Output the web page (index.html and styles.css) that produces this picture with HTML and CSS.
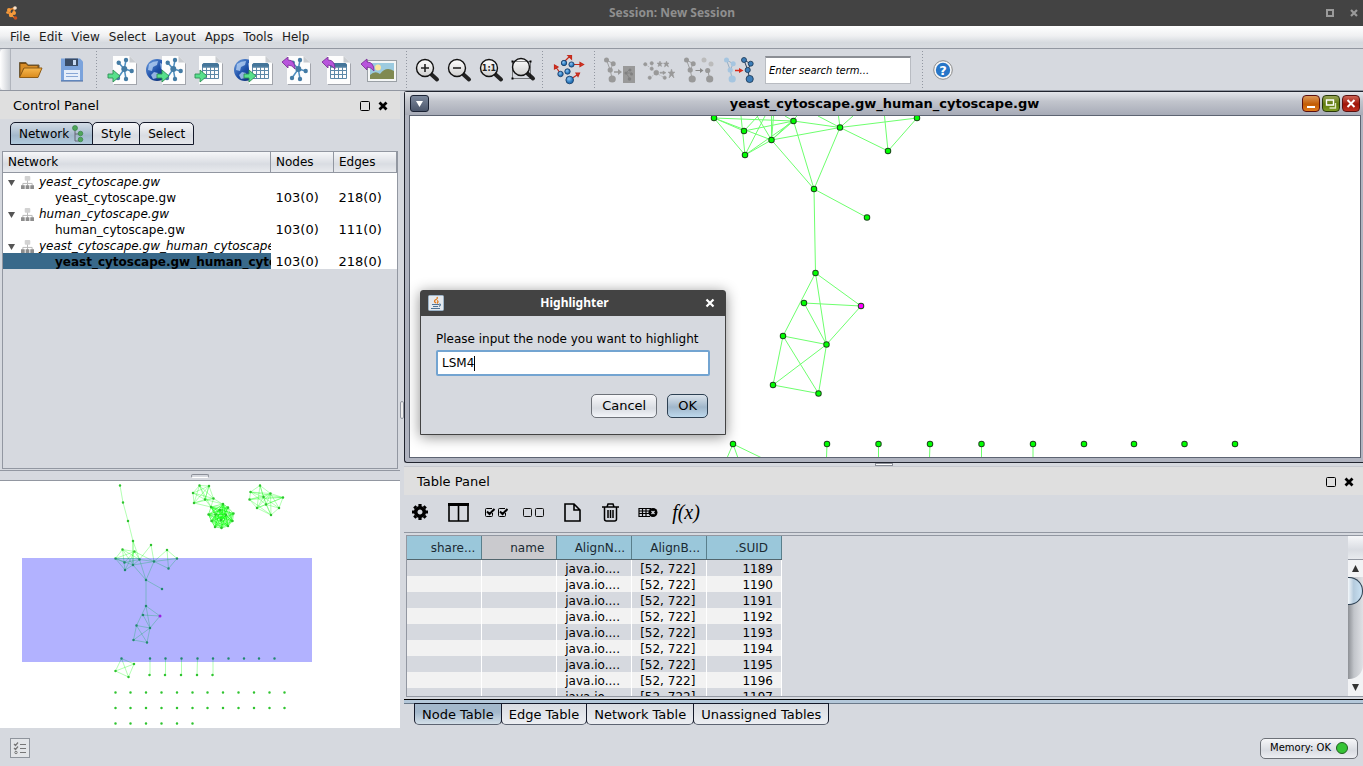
FILE: index.html
```html
<!DOCTYPE html>
<html lang="en">
<head>
<meta charset="utf-8">
<title>Session: New Session</title>
<link rel="stylesheet" href="styles.css">
</head>
<body>
<svg class="defs" aria-hidden="true">
  <defs>
    <linearGradient id="gGlobe" x1="0" x2="1" y1="0" y2="1"><stop offset="0" stop-color="#6fa0e0"/><stop offset=".5" stop-color="#1d4fa8"/><stop offset="1" stop-color="#0a2560"/></linearGradient>
    <linearGradient id="gLens" x1="0" x2="0" y1="0" y2="1"><stop offset="0" stop-color="#fff"/><stop offset="1" stop-color="#cfcfcf"/></linearGradient>
    <radialGradient id="gBlue" cx=".4" cy=".35"><stop offset="0" stop-color="#8cc6f5"/><stop offset="1" stop-color="#2573b8"/></radialGradient>
    <linearGradient id="gFolder" x1="0" x2="0" y1="0" y2="1"><stop offset="0" stop-color="#f8b84e"/><stop offset="1" stop-color="#d98a1d"/></linearGradient>
    <g id="page">
      <path d="M1 1H17L24 8V29H1Z" fill="#8b8f96" opacity=".7"/>
      <path d="M0 0H16.500L23 6.500V28H0Z" fill="#fdfdfd"/>
      <path d="M16.500 0V6.500H23Z" fill="#c9ccd0"/>
    </g>
    <g id="netpage">
      <use href="#page"/>
      <path d="M5.700 6.700L11.300 13L13 4M11.300 13L18.700 15M5 22L11.300 13L13 23" stroke="#4f8fc0" stroke-width="1.500" fill="none"/>
      <g fill="#447ba4"><circle cx="5.700" cy="6.700" r="2.200"/><circle cx="13" cy="4" r="2.200"/><circle cx="11.300" cy="13" r="3"/><circle cx="18.700" cy="15" r="2.200"/><circle cx="5" cy="22" r="2.200"/><circle cx="13" cy="23" r="2.200"/></g>
    </g>
    <g id="tablepage">
      <use href="#page"/>
      <path d="M3.500 11V9Q3.500 7.500 5 7.500H18Q19.500 7.500 19.500 9V11Z" fill="#44759a" stroke="#44759a"/>
      <path d="M3.500 11H19.500V22.500H3.500ZM3.500 14.500H19.500M3.500 18.500H19.500M7.500 11V22.500M11.500 11V22.500M15.500 11V22.500" fill="none" stroke="#5c88a8"/>
    </g>
    <path id="arrowin" d="M0 4H5V0L12 6L5 12V8H0Z" fill="#57e08c" stroke="#2f8f55" stroke-width=".9"/>
    <path id="arrowout" d="M0 5L6 0V3Q13 3 13 12Q10 8 6 8V11Z" fill="#b854dc" stroke="#7d3399" stroke-width=".9"/>
    <g id="globe">
      <circle r="11" fill="url(#gGlobe)"/>
      <path d="M-8 -6Q-4 -9 1 -9L0 -5L-4 -3L-5 1L-9 0ZM-3 2L1 3L0 8L-4 9L-6 5ZM3 -7L8 -5L7 1L4 -1Z" fill="#bcd6f5" opacity=".75"/>
    </g>
    <g id="lens">
      <path d="M6.500 6.500L12 11.500" stroke="#222" stroke-width="4" stroke-linecap="round"/>
      <circle r="8.500" fill="url(#gLens)" stroke="#111" stroke-width="1.400"/>
    </g>
    <g id="motif"><path d="M0 0L6.700 3.700L3.700 10L5.700 19M0 0L3.700 10" fill="none" stroke="currentColor" stroke-width=".9"/>
      <circle r="2.500"/><circle cx="6.700" cy="3.700" r="2.500"/><circle cx="3.700" cy="10" r="2.600"/><circle cx="5.700" cy="19" r="3.600"/></g>
    <g id="tree">
      <path d="M8 4V8M3 11V8H13V11M8 8V11" fill="none" stroke="#b5b5b5"/>
      <rect x="5" y="0" width="6" height="5" rx="1" fill="#d2d2d2"/>
      <path d="M1 10H5V14H1ZM6 10H10V14H6ZM11 10H15V14H11Z" fill="#8e8e8e"/>
    </g>
  </defs>
</svg>

<header class="titlebar">
  <svg class="logo" viewBox="0 0 12 14"><path d="M3 4L8 2M3 4L5 9L9 12M5 9L8 7L8 2M1 6L5 9" stroke="#e8862b" stroke-width="1.500"/><g fill="#f79b3c"><circle cx="3" cy="4" r="2"/><circle cx="8" cy="7" r="2"/><circle cx="5" cy="9" r="2.200"/><circle cx="1.500" cy="6.500" r="1.300"/></g><circle cx="9" cy="2" r="1.800" fill="#fbe3cb"/><circle cx="9.500" cy="12" r="1.800" fill="#c9501c"/></svg>
  <h1>Session: New Session</h1>
  <div class="winbtns">
    <button aria-label="Maximize"><svg width="8" height="8"><rect x="1" y="1" width="6" height="6" fill="none" stroke="#9a9a9a" stroke-width="2"/></svg></button>
    <button aria-label="Close"><svg width="8" height="8"><path d="M1 1L7 7M7 1L1 7" stroke="#9a9a9a" stroke-width="2.200"/></svg></button>
  </div>
</header>

<nav class="menubar">
  <button>File</button><button>Edit</button><button>View</button><button>Select</button><button>Layout</button><button>Apps</button><button>Tools</button><button>Help</button>
</nav>

<div class="toolbar">
  <span class="handle"></span>
  <button class="tool w41" aria-label="Open"><svg viewBox="11 49 41 41"><path d="M19.500 77V62.500H26L28 65H39V69" fill="#7e4a0b" stroke="#6d5a3a"/><path d="M20.500 75V64H26L28 66H37.500V68H23.500Z" fill="#d88d28"/><path d="M19.500 77.500L24 68H42L38 77.500Z" fill="url(#gFolder)" stroke="#8f5c15"/></svg></button>
  <button class="tool w41" aria-label="Save"><svg viewBox="52 49 41 41"><path d="M61 58.500H80L83 61.500V81H61Z" fill="#7ba3dc"/><path d="M65 58.500H78V66H65Z" fill="#3a4c66"/><path d="M73 60H76V65H73Z" fill="#c6d9f2"/><path d="M64 70H80V80H64Z" fill="#e6eefa"/><path d="M66 73.500H78M66 76.500H78" stroke="#88a7d6"/><path d="M61 81H83" stroke="#46699f"/></svg></button>
  <span class="sep"></span>
  <button class="tool w42" aria-label="Import network"><svg viewBox="100 49 42 41"><use href="#netpage" x="112" y="56"/><use href="#arrowin" x="107" y="70"/></svg></button>
  <button class="tool w44" aria-label="Import network from web"><svg viewBox="142 49 44 41"><use href="#globe" x="156" y="70"/><use href="#netpage" x="161" y="56"/><use href="#arrowin" x="156" y="70"/></svg></button>
  <button class="tool w42" aria-label="Import table"><svg viewBox="186 49 42 41"><use href="#tablepage" x="198" y="56"/><use href="#arrowin" x="194" y="70"/></svg></button>
  <button class="tool w44" aria-label="Import table from web"><svg viewBox="228 49 44 41"><use href="#globe" x="244" y="70"/><use href="#tablepage" x="248" y="56"/><use href="#arrowin" x="243" y="70"/></svg></button>
  <button class="tool w42" aria-label="Export network"><svg viewBox="272 49 42 41"><use href="#netpage" x="286" y="56"/><use href="#arrowout" x="281" y="57"/></svg></button>
  <button class="tool w42" aria-label="Export table"><svg viewBox="314 49 42 41"><use href="#tablepage" x="326" y="56"/><use href="#arrowout" x="321" y="57"/></svg></button>
  <button class="tool w46" aria-label="Export image"><svg viewBox="356 49 46 41"><rect x="366.500" y="60.500" width="29" height="21" fill="#f4f6f6" stroke="#9aa0a5"/><path d="M369 63H393V79H369Z" fill="#9ccbe0"/><circle cx="377" cy="67.500" r="3" fill="#fbe6a0"/><path d="M369 75Q374 70 379 74Q385 66 393 71V79H369Z" fill="#808a52"/><use href="#arrowout" x="360" y="59"/></svg></button>
  <span class="sep"></span>
  <button class="tool w32" aria-label="Zoom in"><svg viewBox="410 49 32 41"><use href="#lens" x="424" y="68"/><path d="M420 68H428M424 64V72" stroke="#222" stroke-width="1.600"/></svg></button>
  <button class="tool w32" aria-label="Zoom out"><svg viewBox="442 49 32 41"><use href="#lens" x="456" y="68"/><path d="M452 68H460" stroke="#222" stroke-width="1.600"/></svg></button>
  <button class="tool w32" aria-label="Actual size"><svg viewBox="474 49 32 41"><use href="#lens" x="488" y="68"/><text x="488" y="71" class="ratio">1:1</text></svg></button>
  <button class="tool w32" aria-label="Zoom selected"><svg viewBox="506 49 32 41"><use href="#lens" x="520" y="67"/><rect x="511.500" y="61.500" width="18" height="17" fill="none" stroke="#111" stroke-dasharray="1 1"/><path d="M510.500 60.500h2v2h-2zM528.500 60.500h2v2h-2zM510.500 77.500h2v2h-2z"/></svg></button>
  <span class="sep"></span>
  <button class="tool w44" aria-label="Apply layout"><svg viewBox="547 49 44 41"><g stroke="#c32a1c" stroke-width="1.200" fill="#e03a25"><path d="M564 62L570 56M568 55.500H571.500V59ZM572 64.500H581M580 62.500L583.500 64.500L580 66.500ZM560 73L556 67M554.500 69V65L558 67ZM571 79L577 75M576 73H579.500L578 76.500Z"/></g><g fill="url(#gBlue)" stroke="#1a3f6b" stroke-width=".9"><circle cx="564" cy="63" r="2.700"/><circle cx="571.500" cy="64.500" r="2.600"/><circle cx="560.500" cy="74" r="2.700"/><circle cx="567.500" cy="71.500" r="2.700"/><circle cx="569.700" cy="80" r="3.800"/></g></svg></button>
  <span class="sep"></span>
  <button class="tool w40" aria-label="New network from selection"><svg viewBox="598 49 40 41"><g fill="#999" color="#999"><use href="#motif" x="605.500" y="60"/><path d="M613 71.200H617V69L621 72L617 75V72.800H613ZM622 66H634V83H622Z"/></g><path d="M629 69L625 73L629 79M631 73L625 73" stroke="#858585" fill="none"/><g fill="#808080"><circle cx="629" cy="70" r="1.500"/><circle cx="625" cy="73" r="1.500"/><circle cx="630.500" cy="74" r="1.500"/><circle cx="628.500" cy="79" r="1.800"/></g></svg></button>
  <button class="tool w40" aria-label="Select first neighbors"><svg viewBox="638 49 40 41"><g fill="#999" stroke="#999" stroke-width=".5"><circle cx="644.300" cy="64.300" r="1.700"/><circle cx="650.700" cy="63.200" r="1.700"/><circle cx="650.700" cy="68.700" r="1.700"/><circle cx="655.300" cy="72.700" r="2.500"/><circle cx="648.700" cy="77.700" r="1.700"/><circle cx="663.700" cy="77.700" r="1.700"/><path d="M644 64L651 69L651 63M651 69L655 73L649 78M655 73L664 78" fill="none" stroke-dasharray="2 1"/><path d="M659 61L659.700 63L661.500 63L660 64.500L660.500 66.500L659 65.500L657 66.500L657.500 64.500L656 63H658ZM665.500 61L666.200 63H668L666.700 64.500L667.500 67L665.500 65.500L663.500 67L664 64.500L662.500 63H664.700ZM670.500 69L671.500 72H674L672 74L673 78L670.500 75.500L668 78L669 74L667 72H669.500ZM659 72.200H662V71L665 72.700L662 74.500V73.200H659Z"/></g></svg></button>
  <button class="tool w40" aria-label="Hide selected"><svg viewBox="678 49 40 41"><g fill="#999" color="#999"><use href="#motif" x="685.500" y="60"/><g fill="#bbb"><circle cx="703" cy="60" r="2.500"/><circle cx="710" cy="64" r="2.500"/></g><path d="M706.700 70L708.700 79" stroke="#999"/><circle cx="706.700" cy="70.500" r="2.600"/><circle cx="708.700" cy="79" r="3.600"/><path d="M694.500 70H699V68L702.500 70.500L699 73V71H694.500Z" fill="#888"/></g></svg></button>
  <button class="tool w40" aria-label="Show all"><svg viewBox="718 49 40 41"><g fill="#a5c5e0" color="#8ea9c0"><use href="#motif" x="725.500" y="60"/></g><g fill="#3c7db8" stroke="#16324f" stroke-width=".8" color="#16324f"><use href="#motif" x="743" y="60"/></g><path d="M734 69.800H738V68L742.500 70.500L738 73V71.200H734Z" fill="#d92d1c"/></svg></button>
  <input class="search" type="text" placeholder="Enter search term..." aria-label="Search">
  <span class="sep"></span>
  <button class="tool w32" aria-label="Help"><svg viewBox="927 49 32 41"><circle cx="943" cy="70" r="9.300" fill="#f7f7f7" stroke="#8b8b8b"/><circle cx="943" cy="70" r="7.200" fill="#2776c8"/><text x="943" y="75" class="qmark">?</text></svg></button>
</div>

<main class="desk">
  <section class="left">
    <div class="panelhead"><h2>Control Panel</h2>
      <button aria-label="Float"><svg width="10" height="10"><rect x=".5" y=".5" width="9" height="9" rx="1" fill="none" stroke="#000"/></svg></button>
      <button aria-label="Close"><svg width="10" height="10"><path d="M1.500 1.500L8.500 8.500M8.500 1.500L1.500 8.500" stroke="#000" stroke-width="2.800"/></svg></button>
    </div>
    <div class="control">
      <div class="tabs" role="tablist">
        <button class="tab on" role="tab">Network<svg width="12" height="18" viewBox="0 0 12 18"><path d="M3 3V16H8M3 9H8" fill="none" stroke="#667" /><g fill="#4fa65a" stroke="#2d7a3c" stroke-width=".6"><circle cx="3" cy="3" r="2.500"/><circle cx="8.500" cy="8.500" r="2.300"/><circle cx="8.500" cy="14.500" r="2.300"/></g></svg></button><button class="tab" role="tab">Style</button><button class="tab" role="tab">Select</button>
      </div>
      <div class="netbox">
        <table class="nets">
          <colgroup><col><col class="cn"><col class="cn"></colgroup>
          <thead><tr><th>Network</th><th>Nodes</th><th>Edges</th></tr></thead>
          <tbody>
            <tr class="group"><td><svg class="tri" viewBox="0 0 8 8"><path d="M0 1H8L4 8Z"/></svg><svg class="tree" viewBox="0 0 16 14"><use href="#tree"/></svg>yeast_cytoscape.gw</td><td></td><td></td></tr>
            <tr><td class="leaf">yeast_cytoscape.gw</td><td class="num">103(0)</td><td class="num">218(0)</td></tr>
            <tr class="group"><td><svg class="tri" viewBox="0 0 8 8"><path d="M0 1H8L4 8Z"/></svg><svg class="tree" viewBox="0 0 16 14"><use href="#tree"/></svg>human_cytoscape.gw</td><td></td><td></td></tr>
            <tr><td class="leaf">human_cytoscape.gw</td><td class="num">103(0)</td><td class="num">111(0)</td></tr>
            <tr class="group"><td><svg class="tri" viewBox="0 0 8 8"><path d="M0 1H8L4 8Z"/></svg><svg class="tree" viewBox="0 0 16 14"><use href="#tree"/></svg>yeast_cytoscape.gw_human_cytoscape.gw</td><td></td><td></td></tr>
            <tr><td class="leaf chosen">yeast_cytoscape.gw_human_cytoscape.gw</td><td class="num">103(0)</td><td class="num">218(0)</td></tr>
          </tbody>
        </table>
      </div>
    </div>
    <div class="hsplit"><i></i></div>
    <div class="bird">
      <svg viewBox="0 481 400 247" preserveAspectRatio="xMinYMin slice">
        <defs>
          <path id="bn" d="M120 485.500h0M123 502.500h0M128 521h0M133 541h0M122.500 549.500h0M134.500 551.500h0M151 545h0M167 550h0M115.500 558.500h0M124.500 562.500h0M125 570h0M133 565h0M139.500 559.500h0M154 561.500h0M177 558.500h0M168.500 568.500h0M146 580h0M162 589h0M146 606h0M143 615h0M136.500 625.500h0M150 628h0M133.500 640h0M147 642.500h0
          M199.500 485.500h0M209 486h0M193 493h0M194 503h0M205 499.500h0M213.500 498.500h0M211 507h0M223 504h0M228 507.500h0M220 510h0M208.500 514.500h0M215.500 514.500h0M226 515h0M233.500 513.500h0M211.500 521h0M221 520h0M232.500 521h0M215 527h0M221.500 528h0M228 526h0
          M260 485.500h0M250.500 492h0M249.500 499.500h0M270.500 493.500h0M283 497.500h0M263.500 497h0M257 508h0M266 504.500h0M279 508h0M271 515h0
          M121.500 658.500h0M150 658.500h0M165.500 658.500h0M181.500 658.500h0M197.500 658.500h0M213 658.500h0M228.500 658.500h0M244 658.500h0M259 658.500h0M274.500 658.500h0M149.500 675h0M165 675h0M181 675h0M197 675h0M212.500 675h0M134 664h0M115.500 671h0M128.500 677h0
          M115.500 692.500h0M130.500 692.500h0M146 692.500h0M161.500 692.500h0M177 692.500h0M192.500 692.500h0M207.500 692.500h0M223 692.500h0M238.500 692.500h0M254 692.500h0M269.500 692.500h0M284.500 692.500h0
          M115.500 708h0M130.500 708h0M146 708h0M161.500 708h0M177 708h0M192.500 708h0M207.500 708h0M223 708h0M238.500 708h0M254 708h0M269.500 708h0M284.500 708h0
          M115.500 723.500h0M130.500 723.500h0M146 723.500h0M161.500 723.500h0M177 723.500h0M192.500 723.500h0"/>
        </defs>
        <g class="bedge">
          <path d="M120 485.500L123 502.500L128 521L133 541V565M133 541L139.500 559.500M122.500 549.500L134.500 551.500L115.500 558.500ZM122.500 549.500L125 570L115.500 558.500L133 565L122.500 549.500L139.500 559.500L134.500 551.500L124.500 562.500L139.500 559.500L154 561.500L133 565L125 570L134.500 551.500L154 561.500L151 545L139.500 559.500L133 565V541M115.500 558.500H139.500M115.500 558.500L124.500 562.500M154 561.500L167 550L168.500 568.500L177 558.500L154 561.500L168.500 568.500M167 550L177 558.500M133 565L146 580L139.500 559.500M154 561.500L146 580L162 589M146 580V606L160 616L143 615L150 628L146 606L136.500 625.500L150 628L160 616M136.500 625.500L133.500 640L147 642.500L136.500 625.500M133.500 640L150 628L147 642.500"/>
          <path d="M199.500 485.500L209 486L213.500 498.500L194 503L193 493L199.500 485.500L205 499.500L209 486L194 503L205 499.500L193 493L213.500 498.500L199.500 485.500L211 507L213.500 498.500L205 499.500L211 507L194 503L199.500 485.500M193 493L209 486L205 499.500M205 499.500L223 504M213.500 498.500L228 507.500"/>
          <path d="M260 485.500L250.500 492L249.500 499.500L257 508L271 515L279 508L283 497.500L270.500 493.500L260 485.500L263.500 497L283 497.500L266 504.500L250.500 492L270.500 493.500L249.500 499.500L263.500 497L271 515L266 504.500L260 485.500L257 508L270.500 493.500L279 508L263.500 497L257 508L266 504.500L279 508M250.500 492L263.500 497L270.500 493.500L266 504.500M249.500 499.500L283 497.500M250.500 492L283 497.500M257 508L283 497.500M271 515L270.500 493.500M249.500 499.500L271 515"/>
          <path d="M121.500 658.500L115.500 671L128.500 677L134 664ZL128.500 677M115.500 671L134 664M150 658.500V675M165.500 658.500V675M181.500 658.500V675M197.500 658.500L197 675M213 658.500V675"/>
          <path class="dense" d="M211 507L223 504L228 507.500L233.500 513.500L232.500 521L228 526L221.500 528L215 527L211.500 521L208.500 514.500ZL220 510L233.500 513.500L211.500 521L226 515L215 527L220 510L232.500 521L208.500 514.500L223 504L221.500 528L211 507L232.500 521L215.500 514.500L228 526L211 507L226 515L221 520L208.500 514.500L228 507.500L211.500 521L223 504L226 515L228 526L220 510L221.500 528L226 515L232.500 521L223 504L215 527L228 507.500L221 520L233.500 513.500L215 527L215.500 514.500L223 504L221 520L211 507L215.500 514.500L233.500 513.500L221.500 528L228 507.500L211 507L233.500 513.500L228 526L223 504M208.500 514.500H226L220 510L211.500 521L221.500 528L232.500 521L215 527L208.500 514.500L228 526L211.500 521H232.500L228 507.500L208.500 514.500L221.500 528"/>
        </g>
        <use href="#bn" class="bnode"/>
        <rect x="22" y="558" width="290" height="104" fill="#0000ff" opacity=".3"/>
        <path d="M160 616h0" class="bpick"/>
      </svg>
    </div>
  </section>

  <div class="vsplit"><i></i></div>

  <section class="right">
    <div class="frame">
      <div class="frametitle">
        <button class="fmenu" aria-label="Window menu"><svg width="7" height="6"><path d="M0 0H7L3.500 6Z" fill="#fff"/></svg></button>
        <h2>yeast_cytoscape.gw_human_cytoscape.gw</h2>
        <button class="fb min" aria-label="Minimize"><svg width="16" height="15"><path d="M4 11H12" stroke="#fff" stroke-width="2"/></svg></button>
        <button class="fb res" aria-label="Restore"><svg width="16" height="15"><path d="M3.500 4H10.500V9H3.500Z" fill="none" stroke="#fff" stroke-width="1.400"/><path d="M12.500 7V12H6.500" fill="none" stroke="#dfe8c0" stroke-width="1.400"/></svg></button>
        <button class="fb cls" aria-label="Close"><svg width="16" height="15"><path d="M4.500 4L11.500 11M11.500 4L4.500 11" stroke="#fff" stroke-width="2"/></svg></button>
      </div>
      <div class="canvas">
        <svg viewBox="410 116 950 341" preserveAspectRatio="xMinYMin slice">
          <path class="edge" d="M714 118L793.500 121M714 118L744 131M714 118L771.500 140M714 118L745 155M744 131L793.500 121M745 155L771.500 140L793.500 121L840 127.500L917 118M771.500 140L840 127.500M793.500 121L814 189L771.500 140M840 127.500L814 189L867 217.500M840 127.500L888 151L917 118M814 189L815.500 273M741 116L745 155L765 116M744 131L758 116M771.500 140L757 116M771.500 140V116M771.500 140L773.500 116M771.500 140L797 116M793.500 121L785 116M745 155L793.500 121M840 127.500L818 116M840 127.500L838.500 116M840 127.500L853 116M888 151L884.500 116
          M815.500 273L783 336L826.500 344.500L815.500 273L861 306L804 303L826.500 344.500L861 306M783 336L773 385L818.500 393.500L783 336M773 385L826.500 344.500L818.500 393.500
          M733 444L727 458M733 444L738 458M733 444L762 458M827 444L826.500 458M878.500 444V458M930 444L929.500 458M981.500 444V458M1033 444V458"/>
          <defs><path id="mn" d="M714 118h0M744 131h0M745 155h0M771.500 140h0M793.500 121h0M840 127.500h0M917 118h0M888 151h0M814 189h0M867 217.500h0M815.500 273h0M804 303h0M783 336h0M826.500 344.500h0M773 385h0M818.500 393.500h0M733 444h0M827 444h0M878.500 444h0M930 444h0M981.500 444h0M1033 444h0M1084 444h0M1134 444h0M1184.500 444h0M1235 444h0"/></defs>
          <use href="#mn" class="nrim"/><use href="#mn" class="nfill"/>
          <path class="nrim" d="M861 306h0"/><path class="nfill pick" d="M861 306h0"/>
        </svg>
      </div>
    </div>
    <div class="hsplit2"><i></i></div>
    <div class="tablepanel">
      <div class="panelhead"><h2>Table Panel</h2>
        <button aria-label="Float"><svg width="10" height="10"><rect x=".5" y=".5" width="9" height="9" rx="1" fill="none" stroke="#000"/></svg></button>
        <button aria-label="Close"><svg width="10" height="10"><path d="M1.500 1.500L8.500 8.500M8.500 1.500L1.500 8.500" stroke="#000" stroke-width="2.800"/></svg></button>
      </div>
      <div class="ttools">
        <button aria-label="Settings"><svg width="16" height="16" viewBox="-8 -8 16 16"><circle r="4.300" fill="none" stroke="#000" stroke-width="3.600"/><path d="M0 -8V-5M0 8V5M-8 0H-5M8 0H5M-5.700 -5.700L-4 -4M5.700 5.700L4 4M-5.700 5.700L-4 4M5.700 -5.700L4 -4" stroke="#000" stroke-width="3.200"/></svg></button>
        <button aria-label="Columns"><svg width="21" height="19"><path d="M1 1.500H20V18H1ZM10.500 2V18" fill="none" stroke="#000" stroke-width="1.600"/><path d="M0 1.500H21" stroke="#000" stroke-width="3"/></svg></button>
        <button aria-label="Select all"><svg width="24" height="11"><g fill="none" stroke="#000"><path d="M8 1.500H2.500Q1.500 1.500 1.500 2.500V8.500Q1.500 9.500 2.500 9.500H7.500Q8.500 9.500 8.500 8.500V6M21 1.500H15.500Q14.500 1.500 14.500 2.500V8.500Q14.500 9.500 15.500 9.500H20.500Q21.500 9.500 21.500 8.500V6"/><path d="M3 4.500L5.500 7L10.500 2M16 4.500L18.500 7L23.500 2" stroke-width="2"/></g></svg></button>
        <button aria-label="Deselect all"><svg width="22" height="11"><g fill="none" stroke="#111"><rect x=".5" y="1.500" width="8" height="8" rx="1"/><rect x="12.500" y="1.500" width="8" height="8" rx="1"/></g></svg></button>
        <button aria-label="New column"><svg width="17" height="19"><path d="M1 1H10L16 7V18H1ZM10 1V7H16" fill="none" stroke="#000" stroke-width="1.600"/></svg></button>
        <button aria-label="Delete column"><svg width="17" height="19"><path d="M0 4H17M5 4L6 1H11L12 4M2.500 4V16Q2.500 18 4.500 18H12.500Q14.500 18 14.500 16V4M6 7V15M8.500 7V15M11 7V15" fill="none" stroke="#000" stroke-width="1.500"/></svg></button>
        <button aria-label="Delete table"><svg width="20" height="11"><path d="M.5 1.500H13M.5 4H11M.5 6.500H11M.5 9.500H12M1 1V10M4.500 1V10M8 1V10" fill="none" stroke="#000" stroke-width="1.200"/><circle cx="15" cy="5.500" r="4.500"/><path d="M13.500 4L16.500 7M16.500 4L13.500 7" stroke="#d6d9df" stroke-width="1.300"/></svg></button>
        <button class="fx">f(x)</button>
      </div>
      <div class="tablebox">
        <div class="tscroll">
          <table class="data">
            <thead><tr><th>share...</th><th class="gray">name</th><th>AlignN...</th><th>AlignB...</th><th class="wide">.SUID</th></tr></thead>
            <tbody>
              <tr><td></td><td></td><td>java.io....</td><td>[52, 722]</td><td class="n">1189</td></tr>
              <tr><td></td><td></td><td>java.io....</td><td>[52, 722]</td><td class="n">1190</td></tr>
              <tr><td></td><td></td><td>java.io....</td><td>[52, 722]</td><td class="n">1191</td></tr>
              <tr><td></td><td></td><td>java.io....</td><td>[52, 722]</td><td class="n">1192</td></tr>
              <tr><td></td><td></td><td>java.io....</td><td>[52, 722]</td><td class="n">1193</td></tr>
              <tr><td></td><td></td><td>java.io....</td><td>[52, 722]</td><td class="n">1194</td></tr>
              <tr><td></td><td></td><td>java.io....</td><td>[52, 722]</td><td class="n">1195</td></tr>
              <tr><td></td><td></td><td>java.io....</td><td>[52, 722]</td><td class="n">1196</td></tr>
              <tr><td></td><td></td><td>java.io....</td><td>[52, 722]</td><td class="n">1197</td></tr>
            </tbody>
          </table>
        </div>
        <div class="sbar">
          <span class="corner"></span>
          <button aria-label="Scroll up"><svg width="7" height="7"><path d="M0 7L3.500 0L7 7Z" fill="#333"/></svg></button>
          <div class="track"><span class="thumb"></span></div>
          <button aria-label="Scroll down"><svg width="7" height="7"><path d="M0 0L3.500 7L7 0Z" fill="#333"/></svg></button>
        </div>
      </div>
      <div class="btabs" role="tablist">
        <button class="btab on" role="tab">Node Table</button><button class="btab" role="tab">Edge Table</button><button class="btab" role="tab">Network Table</button><button class="btab" role="tab">Unassigned Tables</button>
      </div>
    </div>
  </section>
</main>

<footer class="status">
  <button class="tasks" aria-label="Task history"><svg width="14" height="14"><path d="M1 3L2.500 4.500L5 1.500M1 7L2.500 8.500L5 5.500M7 3.500H13M7 7.500H13M7 11.500H13" fill="none" stroke="#777" stroke-width="1.200"/><circle cx="3" cy="11.500" r="1.200" fill="none" stroke="#777"/></svg></button>
  <button class="memory">Memory: OK<i></i></button>
</footer>

<div class="dialog" role="dialog" aria-labelledby="dlgTitle">
  <div class="dlghead">
    <svg width="16" height="16"><rect x=".5" y=".5" width="15" height="15" rx="1" fill="#e4e9ee" stroke="#9db4c8"/><path d="M8 8Q5 6 8 4.500Q10 3.500 9 2M9 8.500Q11 6.500 9 5.500" fill="none" stroke="#e07818" stroke-width="1.300"/><path d="M4 9.500H11M5 11.500H10M3 13.500H12M11 9Q14 9 11 11.500" fill="none" stroke="#4f7597" stroke-width="1.100"/></svg>
    <h2 id="dlgTitle">Highlighter</h2>
    <button aria-label="Close dialog"><svg width="10" height="10"><path d="M1.500 1.500L8.500 8.500M8.500 1.500L1.500 8.500" stroke="#fff" stroke-width="2.200"/></svg></button>
  </div>
  <div class="dlgbody">
    <label for="node">Please input the node you want to highlight</label>
    <div class="field"><input id="node" type="text" value="LSM4" size="4"><i class="caret"></i></div>
    <div class="dlgbtns"><button class="btn">Cancel</button><button class="btn primary">OK</button></div>
  </div>
</div>
</body>
</html>
```
FILE: styles.css
```css
* { box-sizing: border-box; }
html, body { height: 100%; }
body { margin: 0; display: flex; flex-direction: column; overflow: hidden; background: #d6d9df; color: #000; font: 12px/16px "DejaVu Sans", sans-serif; }
button { font: inherit; color: inherit; border: 0; padding: 0; background: none; display: flex; align-items: center; justify-content: center; }
h1, h2 { margin: 0; font-size: 13px; font-weight: normal; }
svg { display: block; flex: none; }
.defs { position: absolute; width: 0; height: 0; }

/* window title bar */
.titlebar { flex: none; display: flex; align-items: center; height: 26px; background: #434343; padding: 0 5px 0 6px; }
.titlebar .logo { width: 12px; height: 14px; fill: none; }
.titlebar h1 { flex: 1; text-align: center; font: bold 12px/16px "Noto Sans", sans-serif; color: #8f8f8f; }
.winbtns { display: flex; gap: 16px; }

/* menu */
.menubar { flex: none; display: flex; gap: 9px; height: 23px; padding-left: 10px; color: #1c1c1c; background: linear-gradient(#fff, #eff0f2 45%, #d6dadf 75%, #d8dbe0); border-bottom: 1px solid #9297a1; }

/* toolbar */
.toolbar { flex: none; display: flex; align-items: center; height: 42px; border-bottom: 1px solid #9297a1; }
.handle { width: 11px; height: 100%; background: linear-gradient(90deg, #fff, #ccd0d6); border-right: 1px solid #b0b4bc; border-radius: 4px 0 0 4px; }
.tool svg { width: 100%; height: 41px; }
.w32 { width: 32px; }
.w40 { width: 40px; }
.w41 { width: 41px; }
.w42 { width: 42px; }
.w44 { width: 44px; }
.w46 { width: 46px; }
.sep { width: 8px; height: 38px; background: linear-gradient(#9297a1 1px, transparent 1px) 3px 0 / 1px 3px repeat-y; }
.ratio { font: bold 8px "DejaVu Sans", sans-serif; text-anchor: middle; fill: #222; }
.qmark { font: bold 13px "DejaVu Sans", sans-serif; text-anchor: middle; fill: #fff; }
.search { width: 146px; height: 28px; margin: 0 8px 0 6px; padding: 0 3px; border: 1px solid #b9bcc2; border-top: 2px solid #8b8e94; background: #fff; font: italic 10px "DejaVu Sans", sans-serif; }
.search::placeholder { color: #000; opacity: 1; }

/* panels */
.desk { flex: 1; min-height: 0; display: flex; }
.left { width: 400px; flex: none; display: flex; flex-direction: column; }
.panelhead { flex: none; display: flex; align-items: center; gap: 8px; height: 28px; padding: 1px 12px 0 13px; background: #dfdfdf; }
.panelhead h2 { flex: 1; }
.control { flex: 1; min-height: 0; display: flex; flex-direction: column; padding: 3px 2px 1px; }
.tabs { flex: none; display: flex; height: 23px; margin-left: 8px; }
.tab { height: 23px; padding: 0 8px; border: 1px solid #14192a; border-radius: 5px 5px 0 0; background: linear-gradient(#f6f7f9, #d9dce2 60%, #e4e6ea); margin-right: -1px; }
.tab.on { background: linear-gradient(#d3dce6, #a3b8cc 60%, #b2cbdd); }
.tab svg { margin-left: 3px; }
.netbox { flex: 1; margin-top: 6px; border: 1px solid #9297a1; overflow: hidden; }
.nets { width: 100%; table-layout: fixed; border-collapse: collapse; }
.cn { width: 63px; }
.nets th { height: 20px; padding: 0 0 0 5px; text-align: left; font-weight: normal; border-right: 1px solid #9297a1; border-bottom: 1px solid #9297a1; background: linear-gradient(#f6f7f9, #d9dce2 60%, #e8eaee); }
.nets td { height: 16px; padding: 2px 0 0 5px; line-height: 14px; white-space: nowrap; overflow: hidden; background: #fff; }
.nets .num { font-size: 13px; }
.group td { font-style: italic; }
.tri { display: inline-block; width: 7px; height: 7px; margin-right: 5px; fill: #555; }
.tree { display: inline-block; width: 15px; height: 13px; margin-right: 4px; vertical-align: -3px; }
.nets .leaf { padding-left: 52px; }
.nets .chosen { background: #39698a; font-weight: bold; }
.hsplit { flex: none; height: 11px; border-top: 1px solid #9297a1; border-bottom: 1px solid #9297a1; }
.hsplit i { display: block; width: 18px; height: 4px; margin: 3px auto 0; border: 1px solid #8b8f98; border-bottom-color: #fff; border-radius: 2px; background: #d6d9df; }
.bird { flex: none; height: 247px; background: #fff; overflow: hidden; }
.bird svg { width: 100%; height: 100%; }
.bedge { fill: none; stroke: #00ff00; stroke-width: 1; }
.bedge path { opacity: .3; }
.bedge .dense { opacity: .45; }
.bnode { stroke: #2fc42f; stroke-width: 2.500px; stroke-linecap: round; }
.bpick { stroke: #9a20e0; stroke-width: 3; stroke-linecap: round; }
.vsplit { width: 4px; flex: none; display: flex; align-items: center; }
.vsplit i { width: 4px; height: 18px; border: 1px solid #9297a1; border-radius: 2px; background: #eee; }

.right { flex: 1; min-width: 0; display: flex; flex-direction: column; }
.frame { flex: 1; min-height: 0; display: flex; flex-direction: column; padding: 0 2px 4px 4px; background: #b0b4c0; border: 1px solid #20242e; border-right: 0; border-radius: 3px 0 0 3px; }
.frametitle { flex: none; display: flex; align-items: center; gap: 2px; height: 23px; margin: 0 -2px 0 -4px; padding: 0 3px 0 5px; background: linear-gradient(#e3e5ea, #c2c5cd 40%, #a7abb7); }
.frametitle h2 { flex: 1; padding-left: 38px; text-align: center; font-weight: bold; }
.fmenu { width: 19px; height: 17px; border: 1px solid #1a2233; border-radius: 3px; background: linear-gradient(#7c889c, #4b566b); }
.fb { width: 18px; height: 17px; border-radius: 4px; border: 1px solid #5a1010; }
.fb svg { width: 16px; }
.min { background: linear-gradient(#dd9858, #c35c04 55%, #e07a1c); }
.res { background: linear-gradient(#97a457, #5f7a0c 55%, #7f9c24); border-color: #28380a; }
.cls { background: linear-gradient(#cd6456, #a01508 55%, #c03020); }
.canvas { flex: 1; min-height: 0; border: 1px solid #5d6472; background: #fff; overflow: hidden; }
.canvas svg { width: 100%; height: 100%; }
.edge { fill: none; stroke: #6eff6e; stroke-width: 1; }
.nrim { stroke: #1c4a1c; stroke-width: 6.500px; stroke-linecap: round; }
.nfill { stroke: #00ff00; stroke-width: 4.600px; stroke-linecap: round; }
.pick { stroke: #ff00ff; }
.hsplit2 { flex: none; height: 4px; border-bottom: 1px solid #c6c9cf; }
.hsplit2 i { display: block; width: 18px; height: 3px; margin: 0 auto; border: 1px solid #8b8f98; background: #fff; }

/* table panel */
.tablepanel { flex: none; height: 261px; display: flex; flex-direction: column; }
.tablepanel .panelhead { padding: 1px 9px 0 13px; }
.ttools { flex: none; display: flex; align-items: center; gap: 14px; height: 38px; padding: 0 0 3px 4px; border-bottom: 1px solid #9297a1; }
.ttools button { width: 24px; }
.ttools .fx { font: italic 20px/20px "Liberation Serif", serif; }
.tablebox { display: flex; flex: none; height: 162px; margin: 2px 0 0 2px; border: 1px solid #9297a1; border-right: 0; }
.tscroll { flex: 1; overflow: hidden; }
.data { table-layout: fixed; width: 375px; border-collapse: collapse; }
.data th { height: 23px; padding: 1px 6px 0 0; text-align: right; font-weight: normal; background: #9ac7da; border-right: 1px solid #5a7f8c; border-bottom: 1px solid #53666e; color: #1a2a33; }
.data th.gray { background: #cacace; padding-right: 12px; }
.data th.wide { padding-right: 13px; }
.data td { height: 16px; padding: 2px 0 0 8px; line-height: 14px; white-space: nowrap; border-right: 1px solid #fff; }
.data tr:nth-child(even) td { background: #f2f2f2; }
.data .n { text-align: right; padding: 2px 8px 0 0; }
.sbar { width: 15px; flex: none; display: flex; flex-direction: column; background: #f2f3f5; }
.corner { height: 24px; background: linear-gradient(#f6f7f9, #d9dce2 60%, #e8eaee); border-bottom: 1px solid #9297a1; }
.sbar button { height: 17px; }
.track { flex: 1; background: linear-gradient(90deg, #8d9095, #c2c5ca 40%, #dfe1e5); border-radius: 0 0 14px 0; }
.thumb { display: block; width: 15px; height: 28px; border: 1px solid #2d4052; border-left: 0; border-radius: 0 14px 14px 0; background: linear-gradient(90deg, #f4f8fb, #b5cbdd 40%, #c9e2f4); }
.btabs { flex: none; display: flex; margin-top: 2px; height: 27px; padding: 4px 0 0 10px; font-size: 13px; background: linear-gradient(#000 0 1px, #b4c8da 1px 4px, #6b7a8a 4px 5px, transparent 5px); }
.btab { height: 22px; padding: 1px 7px 0; border: 1px solid #14192a; border-bottom-color: #5d6472; border-radius: 0 0 5px 5px; background: linear-gradient(#d9dce2, #eceef2); margin-right: -1px; }
.btab.on { background: linear-gradient(#a3b8cc 40%, #d3dfe8); }

/* status bar */
.status { flex: none; height: 38px; display: flex; align-items: center; justify-content: space-between; padding: 2px 5px 0 10px; }
.tasks { width: 20px; height: 20px; border: 1px solid #8f949c; background: #e3e5e8; }
.memory { width: 98px; height: 21px; gap: 5px; border: 1px solid #6d7178; border-radius: 5px; font-size: 10px; background: linear-gradient(#f6f7f9, #d9dce2 60%, #eceef2); }
.memory i { width: 12px; height: 12px; border: 1px solid #215f21; border-radius: 6px; background: #35c435; }

/* dialog */
.dialog { position: absolute; left: 420px; top: 290px; width: 306px; border: 1px solid #434343; border-radius: 3px 3px 0 0; background: #d6d9df; box-shadow: 0 2px 14px rgba(0, 0, 0, .45); }
.dlghead { display: flex; align-items: center; height: 25px; padding: 0 10px 1px 7px; background: #434343; color: #fff; }
.dlghead h2 { flex: 1; text-align: center; font: bold 12px/16px "Noto Sans", sans-serif; }
.dlgbody { padding: 15px 15px 16px; }
.dlgbody label { display: block; white-space: nowrap; }
.field { display: flex; align-items: center; height: 26px; margin-top: 3px; padding: 0 4px; border: 2px solid #73a4d1; border-radius: 2px; background: #fff; }
.field input { width: 32px; padding: 0; border: 0; outline: 0; background: none; font: inherit; }
.caret { width: 1px; height: 15px; background: #000; }
.dlgbtns { display: flex; justify-content: flex-end; gap: 10px; margin: 18px 2px 0 0; font-size: 13px; }
.btn { height: 24px; padding: 0 10px; border: 1px solid #6d7178; border-radius: 5px; background: linear-gradient(#f9f9fb, #d9dce2 60%, #f3f5f9); }
.primary { border-color: #2d4052; background: linear-gradient(#dbe3eb, #a0b6ca 55%, #bdd8ec); }
```
